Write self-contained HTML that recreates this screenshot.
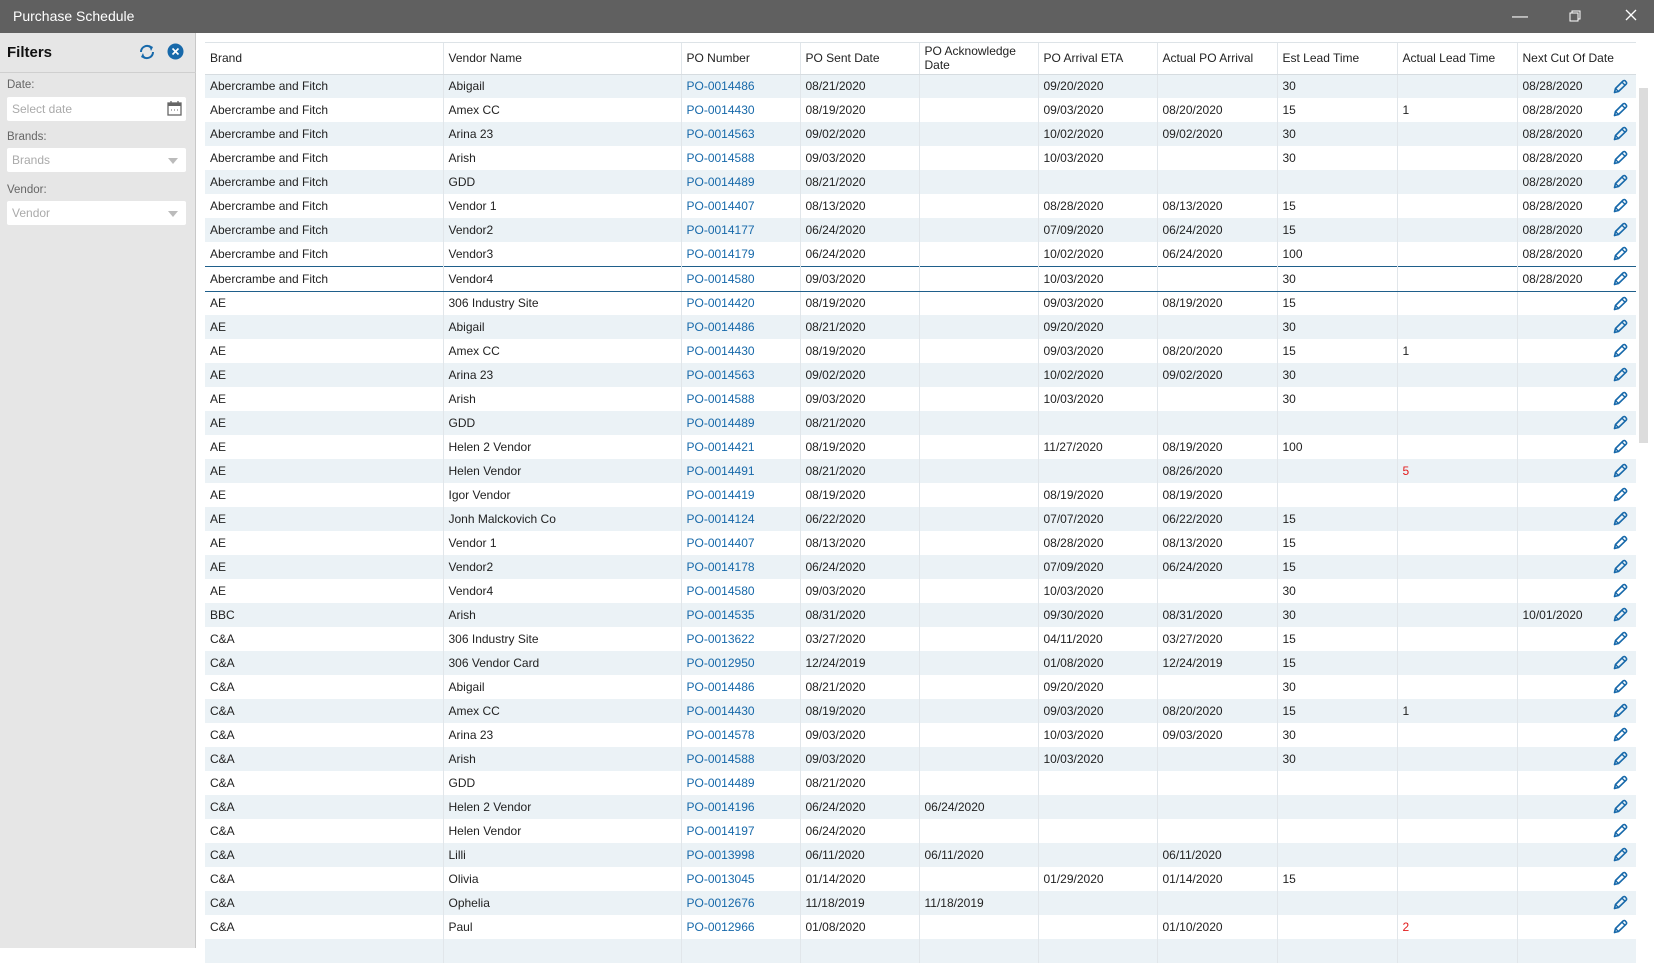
<!DOCTYPE html>
<html><head><meta charset="utf-8"><style>
*{box-sizing:border-box;margin:0;padding:0}
body{width:1654px;height:948px;overflow:hidden;font-family:"Segoe UI","Liberation Sans",sans-serif;background:#fff;position:relative;color:#222}
.title{position:absolute;left:0;top:0;width:1654px;height:33px;background:#606060;color:#fff;font-size:14px;line-height:33px;padding-left:13px}
.wc{position:absolute;top:0;height:33px;color:#fff;font-size:16px;line-height:33px}
.side{position:absolute;left:0;top:33px;width:196px;height:915px;background:#e6e6e6;border-right:1px solid #c8c8c8}
.side h1{position:absolute;left:7px;top:11px;font-size:15px;font-weight:bold;color:#111}
.sep{position:absolute;left:0;top:39px;width:196px;height:1px;background:#cfcfcf}
.lbl{position:absolute;left:7px;font-size:11.5px;color:#666}
.inp{position:absolute;left:7px;width:179px;height:24px;background:#fff;border-radius:2px;font-size:12px;color:#aaa;padding-left:5px;line-height:24px}
.arr{position:absolute;right:8px;top:10px;width:0;height:0;border-left:5px solid transparent;border-right:5px solid transparent;border-top:6px solid #bbb}
.grid{position:absolute;left:205px;top:42px;width:1431px;border-top:1px solid #dde3e7}
table{border-collapse:collapse;table-layout:fixed;width:1431px;font-size:12px}
th{height:31px;font-weight:normal;text-align:left;padding:0 5px;border-right:1px solid #e1e6ea;border-bottom:1px solid #d6dce0;line-height:14px;color:#222;vertical-align:middle}
td{height:24px;padding:0 5px;border-right:1px solid #e1e6ea;white-space:nowrap;overflow:hidden;color:#222;position:relative}
tr.o td{background:#ebf2f6}
tr.sel td{border-top:1.5px solid #1f5f8b;border-bottom:1.5px solid #1f5f8b;height:25px}
td.po{color:#1769aa}
td.r{color:#e21b1b}
svg.p{position:absolute;right:8px;top:4px}
th:last-child,td:last-child{border-right:none}
.sb{position:absolute;left:1639px;top:88px;width:9px;height:355px;background:#dcdcdc}
</style></head><body>
<div class="title">Purchase Schedule</div>
<div class="wc" style="left:1512px">—</div>
<div class="wc" style="left:1569px"><svg width="12" height="12" viewBox="0 0 12 12" style="vertical-align:-1px"><rect x="1" y="3" width="8" height="8" fill="none" stroke="#fff"/><path d="M3 3V1h8v8H9" fill="none" stroke="#fff"/></svg></div>
<div class="wc" style="left:1625px"><svg width="12" height="12" viewBox="0 0 12 12"><path d="M1 1L11 11M11 1L1 11" stroke="#fff" stroke-width="1.3"/></svg></div>
<div class="side">
<h1>Filters</h1>
<svg style="position:absolute;left:138px;top:11px" width="18" height="16" viewBox="0 0 18 16"><path d="M3 8a6 6 0 0 1 10-4.5" fill="none" stroke="#1769aa" stroke-width="2"/><path d="M15 8a6 6 0 0 1-10 4.5" fill="none" stroke="#1769aa" stroke-width="2"/><path d="M11 1l4 2-2 4z" fill="#1769aa"/><path d="M7 15l-4-2 2-4z" fill="#1769aa"/></svg>
<svg style="position:absolute;left:167px;top:10px" width="17" height="17" viewBox="0 0 17 17"><circle cx="8.5" cy="8.5" r="8" fill="#1769aa"/><path d="M5.5 5.5l6 6M11.5 5.5l-6 6" stroke="#fff" stroke-width="1.6"/></svg>
<div class="sep"></div>
<div class="lbl" style="top:46px">Date:</div>
<div class="inp" style="top:64px">Select date<svg style="position:absolute;right:4px;top:4px" width="15" height="15" viewBox="0 0 15 15"><rect x="1" y="2" width="13" height="12" fill="none" stroke="#666" stroke-width="1.3"/><rect x="1" y="2" width="13" height="3" fill="#666"/><path d="M4 0v3M11 0v3" stroke="#666" stroke-width="1.3"/><path d="M4 9h1M7 9h1M10 9h1" stroke="#666"/></svg></div>
<div class="lbl" style="top:98px">Brands:</div>
<div class="inp" style="top:115px">Brands<div class="arr"></div></div>
<div class="lbl" style="top:151px">Vendor:</div>
<div class="inp" style="top:168px">Vendor<div class="arr"></div></div>
</div>
<div class="grid"><table>
<colgroup><col style="width:238px"><col style="width:238px"><col style="width:119px"><col style="width:119px"><col style="width:119px"><col style="width:119px"><col style="width:120px"><col style="width:120px"><col style="width:120px"><col style="width:119px"></colgroup>
<thead><tr><th>Brand</th><th>Vendor Name</th><th>PO Number</th><th>PO Sent Date</th><th>PO Acknowledge Date</th><th>PO Arrival ETA</th><th>Actual PO Arrival</th><th>Est Lead Time</th><th>Actual Lead Time</th><th>Next Cut Of Date</th></tr></thead>
<tbody id="b"></tbody></table></div>
<div class="sb"></div>
<script>
var d=[
["Abercrambe and Fitch","Abigail","PO-0014486","08/21/2020","","09/20/2020","","30","","08/28/2020"],
["Abercrambe and Fitch","Amex CC","PO-0014430","08/19/2020","","09/03/2020","08/20/2020","15","1","08/28/2020"],
["Abercrambe and Fitch","Arina 23","PO-0014563","09/02/2020","","10/02/2020","09/02/2020","30","","08/28/2020"],
["Abercrambe and Fitch","Arish","PO-0014588","09/03/2020","","10/03/2020","","30","","08/28/2020"],
["Abercrambe and Fitch","GDD","PO-0014489","08/21/2020","","","","","","08/28/2020"],
["Abercrambe and Fitch","Vendor 1","PO-0014407","08/13/2020","","08/28/2020","08/13/2020","15","","08/28/2020"],
["Abercrambe and Fitch","Vendor2","PO-0014177","06/24/2020","","07/09/2020","06/24/2020","15","","08/28/2020"],
["Abercrambe and Fitch","Vendor3","PO-0014179","06/24/2020","","10/02/2020","06/24/2020","100","","08/28/2020"],
["Abercrambe and Fitch","Vendor4","PO-0014580","09/03/2020","","10/03/2020","","30","","08/28/2020"],
["AE","306 Industry Site","PO-0014420","08/19/2020","","09/03/2020","08/19/2020","15","",""],
["AE","Abigail","PO-0014486","08/21/2020","","09/20/2020","","30","",""],
["AE","Amex CC","PO-0014430","08/19/2020","","09/03/2020","08/20/2020","15","1",""],
["AE","Arina 23","PO-0014563","09/02/2020","","10/02/2020","09/02/2020","30","",""],
["AE","Arish","PO-0014588","09/03/2020","","10/03/2020","","30","",""],
["AE","GDD","PO-0014489","08/21/2020","","","","","",""],
["AE","Helen 2 Vendor","PO-0014421","08/19/2020","","11/27/2020","08/19/2020","100","",""],
["AE","Helen Vendor","PO-0014491","08/21/2020","","","08/26/2020","","*5",""],
["AE","Igor Vendor","PO-0014419","08/19/2020","","08/19/2020","08/19/2020","","",""],
["AE","Jonh Malckovich Co","PO-0014124","06/22/2020","","07/07/2020","06/22/2020","15","",""],
["AE","Vendor 1","PO-0014407","08/13/2020","","08/28/2020","08/13/2020","15","",""],
["AE","Vendor2","PO-0014178","06/24/2020","","07/09/2020","06/24/2020","15","",""],
["AE","Vendor4","PO-0014580","09/03/2020","","10/03/2020","","30","",""],
["BBC","Arish","PO-0014535","08/31/2020","","09/30/2020","08/31/2020","30","","10/01/2020"],
["C&amp;A","306 Industry Site","PO-0013622","03/27/2020","","04/11/2020","03/27/2020","15","",""],
["C&amp;A","306 Vendor Card","PO-0012950","12/24/2019","","01/08/2020","12/24/2019","15","",""],
["C&amp;A","Abigail","PO-0014486","08/21/2020","","09/20/2020","","30","",""],
["C&amp;A","Amex CC","PO-0014430","08/19/2020","","09/03/2020","08/20/2020","15","1",""],
["C&amp;A","Arina 23","PO-0014578","09/03/2020","","10/03/2020","09/03/2020","30","",""],
["C&amp;A","Arish","PO-0014588","09/03/2020","","10/03/2020","","30","",""],
["C&amp;A","GDD","PO-0014489","08/21/2020","","","","","",""],
["C&amp;A","Helen 2 Vendor","PO-0014196","06/24/2020","06/24/2020","","","","",""],
["C&amp;A","Helen Vendor","PO-0014197","06/24/2020","","","","","",""],
["C&amp;A","Lilli","PO-0013998","06/11/2020","06/11/2020","","06/11/2020","","",""],
["C&amp;A","Olivia","PO-0013045","01/14/2020","","01/29/2020","01/14/2020","15","",""],
["C&amp;A","Ophelia","PO-0012676","11/18/2019","11/18/2019","","","","",""],
["C&amp;A","Paul","PO-0012966","01/08/2020","","","01/10/2020","","*2",""],
["","","","","","","","","",""]];
var pen='<svg class="p" width="16" height="16" viewBox="0 0 16 16"><path d="M2.5 13.5l1-4L11 2a1.6 1.6 0 0 1 2.6 0.4l0.3 0.3A1.6 1.6 0 0 1 14 5.3L6.5 12.5z" fill="none" stroke="#1769aa" stroke-width="1.6" stroke-linejoin="round"/><path d="M3.5 9.5l3 3M10 3.2l2.8 2.8" stroke="#1769aa" stroke-width="1.4"/></svg>';
var h='';
d.forEach(function(r,i){var c=i==8?'sel':(i%2==0?'o':'');h+='<tr class="'+c+'">';
var last=i==d.length-1;
r.forEach(function(v,j){var cl=j==2?'po':'';if(v[0]=='*'){cl='r';v=v.slice(1)}
h+='<td class="'+cl+'">'+v+(j==9&&!last?pen:'')+'</td>'});h+='</tr>'});
document.getElementById('b').innerHTML=h;
</script>
</body></html>
